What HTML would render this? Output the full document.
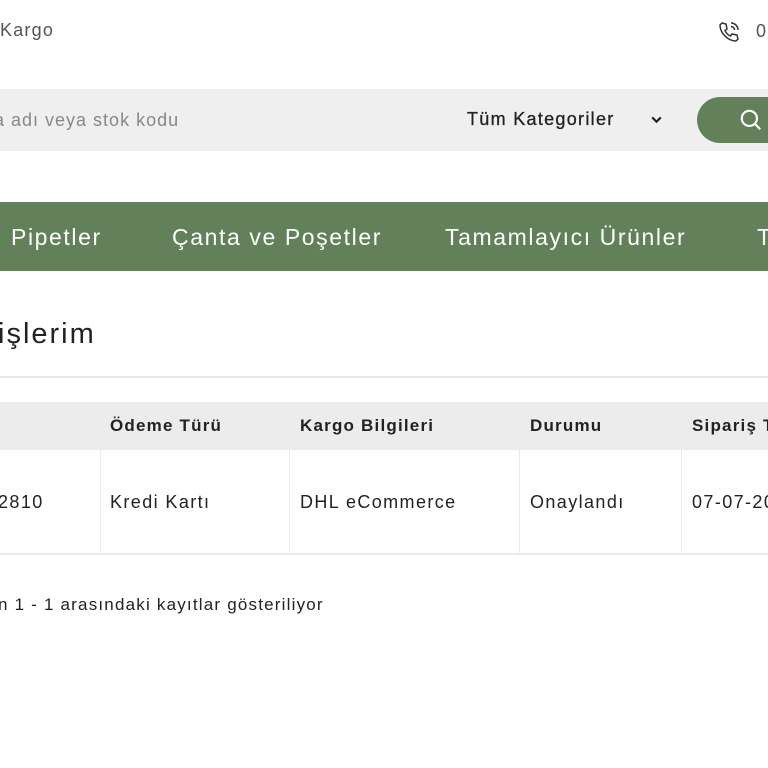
<!DOCTYPE html>
<html><head><meta charset="utf-8"><style>
body{margin:0;width:768px;height:768px;overflow:hidden;background:#fff;font-family:"Liberation Sans",sans-serif;position:relative;color:#222}
.a{position:absolute;white-space:nowrap}
</style></head><body>
<div class="a" style="left:0;top:20px;font-size:18px;color:#555;letter-spacing:1.2px">Kargo</div>
<svg class="a" style="left:717px;top:20px" width="24" height="24" viewBox="0 0 24 24" fill="none" stroke="#333" stroke-width="1.5"><path d="M5 3l4 1 1 5-2 1.5c1 2.5 3 4.5 5.5 5.5L15 14l5 1 1 4-2 2C11 21 3 13 3 5z"/><path d="M14 3a7 7 0 0 1 7 7M14 6.5a3.5 3.5 0 0 1 3.5 3.5"/></svg>
<div class="a" style="left:756px;top:21px;font-size:18px;color:#555">0</div>
<div class="a" style="left:0;top:89px;width:768px;height:62px;background:#efefef"></div>
<div class="a" style="left:-6px;top:110px;font-size:18px;color:#888;letter-spacing:1px">a adı veya stok kodu</div>
<div class="a" style="left:467px;top:109px;font-size:18px;color:#222;letter-spacing:1.3px;-webkit-text-stroke:0.3px #222">Tüm Kategoriler</div>
<svg class="a" style="left:650px;top:113px" width="13" height="13" viewBox="0 0 12 12" fill="none" stroke="#222" stroke-width="2"><path d="M2 4l4 4 4-4"/></svg>
<div class="a" style="left:697px;top:97px;width:100px;height:46px;background:#62815a;border-radius:23px"></div>
<svg class="a" style="left:738px;top:107px" width="26" height="26" viewBox="0 0 24 24" fill="none" stroke="#fff" stroke-width="2"><circle cx="10.5" cy="10.5" r="7"/><path d="M15.5 15.5l5 5"/></svg>
<div class="a" style="left:0;top:202px;width:768px;height:69px;background:#62815a"></div>
<div class="a" style="left:11px;top:224px;font-size:23px;color:#fff;letter-spacing:1.6px">Pipetler</div>
<div class="a" style="left:172px;top:224px;font-size:23px;color:#fff;letter-spacing:1.6px">Çanta ve Poşetler</div>
<div class="a" style="left:445px;top:224px;font-size:23px;color:#fff;letter-spacing:1.6px">Tamamlayıcı Ürünler</div>
<div class="a" style="left:757px;top:224px;font-size:23px;color:#fff">T</div>
<div class="a" style="left:-2px;top:318px;font-size:29px;font-weight:500;letter-spacing:2px">işlerim</div>
<div class="a" style="left:0;top:376px;width:768px;height:2px;background:#e8e8e8"></div>
<div class="a" style="left:0;top:402px;width:768px;height:48px;background:#ececec"></div>
<div class="a" style="left:110px;top:416px;font-size:17px;font-weight:bold;letter-spacing:1.2px">Ödeme Türü</div>
<div class="a" style="left:300px;top:416px;font-size:17px;font-weight:bold;letter-spacing:1.2px">Kargo Bilgileri</div>
<div class="a" style="left:530px;top:416px;font-size:17px;font-weight:bold;letter-spacing:1.2px">Durumu</div>
<div class="a" style="left:692px;top:416px;font-size:17px;font-weight:bold;letter-spacing:1.2px">Sipariş T</div>
<div class="a" style="left:100px;top:450px;width:1px;height:103px;background:#eaeaea"></div>
<div class="a" style="left:289px;top:450px;width:1px;height:103px;background:#eaeaea"></div>
<div class="a" style="left:519px;top:450px;width:1px;height:103px;background:#eaeaea"></div>
<div class="a" style="left:681px;top:450px;width:1px;height:103px;background:#eaeaea"></div>
<div class="a" style="left:0;top:553px;width:768px;height:2px;background:#eaeaea"></div>
<div class="a" style="left:-2px;top:492px;font-size:18px;letter-spacing:1.4px">2810</div>
<div class="a" style="left:110px;top:492px;font-size:18px;letter-spacing:1.4px">Kredi Kartı</div>
<div class="a" style="left:300px;top:492px;font-size:18px;letter-spacing:1.4px">DHL eCommerce</div>
<div class="a" style="left:530px;top:492px;font-size:18px;letter-spacing:1.4px">Onaylandı</div>
<div class="a" style="left:692px;top:492px;font-size:18px;letter-spacing:1.4px">07-07-20</div>
<div class="a" style="left:-2px;top:595px;font-size:17px;letter-spacing:1.2px">n 1 - 1 arasındaki kayıtlar gösteriliyor</div>
</body></html>
